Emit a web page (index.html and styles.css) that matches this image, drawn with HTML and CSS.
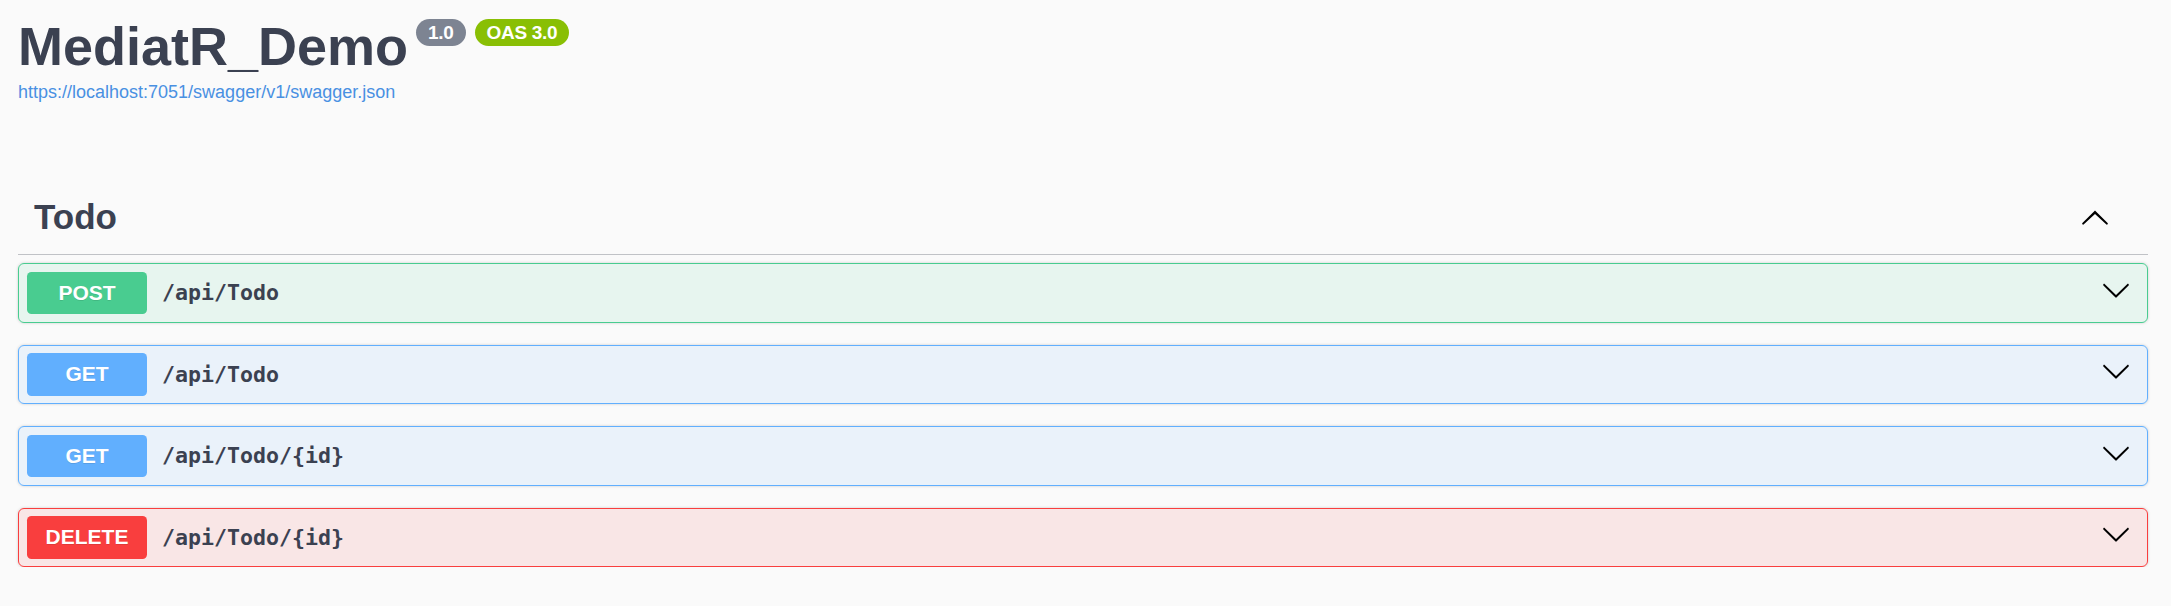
FILE: index.html
```html
<!DOCTYPE html>
<html lang="en">
<head>
<meta charset="utf-8">
<title>MediatR_Demo</title>
<link rel="stylesheet" href="styles.css">
</head>
<body>
<div class="page">
  <header class="info">
    <div class="title-row">
      <h1 class="title">MediatR_Demo</h1>
      <span class="badge version">1.0</span>
      <span class="badge oas">OAS 3.0</span>
    </div>
    <a class="base-url" href="#">https://localhost:7051/swagger/v1/swagger.json</a>
  </header>

  <section class="tag-section">
    <div class="tag-header">
      <h3 class="tag-name">Todo</h3>
      <span class="toggle">
        <svg class="arrow" viewBox="0 0 20 20" width="30" height="30"><path d="M17.418 14.908c.271.268.709.268.979 0s.271-.701 0-.969l-7.908-7.83c-.27-.268-.707-.268-.979 0l-7.908 7.83c-.27.268-.27.701 0 .969.271.268.709.268.978 0L10 8l7.418 6.908z"/></svg>
      </span>
    </div>

    <div class="opblocks">
      <div class="opblock post">
        <span class="method">POST</span>
        <span class="path">/api/Todo</span>
        <svg class="arrow down" viewBox="0 0 20 20" width="30" height="30"><path d="M17.418 6.109c.272-.268.709-.268.979 0s.271.701 0 .969l-7.908 7.83c-.27.268-.707.268-.979 0l-7.908-7.830c-.27-.268-.27-.701 0-.969.271-.268.709-.268.979 0L10 13.25l7.418-7.141z"/></svg>
      </div>
      <div class="opblock get">
        <span class="method">GET</span>
        <span class="path">/api/Todo</span>
        <svg class="arrow down" viewBox="0 0 20 20" width="30" height="30"><path d="M17.418 6.109c.272-.268.709-.268.979 0s.271.701 0 .969l-7.908 7.83c-.27.268-.707.268-.979 0l-7.908-7.83c-.27-.268-.27-.701 0-.969.271-.268.709-.268.979 0L10 13.25l7.418-7.141z"/></svg>
      </div>
      <div class="opblock get">
        <span class="method">GET</span>
        <span class="path">/api/Todo/{id}</span>
        <svg class="arrow down" viewBox="0 0 20 20" width="30" height="30"><path d="M17.418 6.109c.272-.268.709-.268.979 0s.271.701 0 .969l-7.908 7.83c-.27.268-.707.268-.979 0l-7.908-7.83c-.27-.268-.27-.701 0-.969.271-.268.709-.268.979 0L10 13.25l7.418-7.141z"/></svg>
      </div>
      <div class="opblock delete">
        <span class="method">DELETE</span>
        <span class="path">/api/Todo/{id}</span>
        <svg class="arrow down" viewBox="0 0 20 20" width="30" height="30"><path d="M17.418 6.109c.272-.268.709-.268.979 0s.271.701 0 .969l-7.908 7.83c-.27.268-.707.268-.979 0l-7.908-7.83c-.27-.268-.27-.701 0-.969.271-.268.709-.268.979 0L10 13.25l7.418-7.141z"/></svg>
      </div>
    </div>
  </section>
</div>
</body>
</html>
```

FILE: styles.css
```css
html, body {
  margin: 0;
  padding: 0;
  background: #fafafa;
}

body {
  font-family: "Liberation Sans", Arial, sans-serif;
  color: #3b4151;
}

.page {
  padding: 15px 23px 0 18px;
}

/* ---------- info ---------- */
.title-row {
  display: flex;
  align-items: flex-start;
}

.title {
  margin: 0;
  font-size: 54px;
  line-height: 62px;
  font-weight: 700;
  color: #3b4151;
}

.badge {
  display: inline-block;
  margin-top: 4px;
  height: 27px;
  line-height: 27px;
  padding: 0 12px;
  border-radius: 57px;
  color: #fff;
  font-size: 19px;
  letter-spacing: -0.3px;
  font-weight: 700;
}

.version {
  margin-left: 8px;
  background: #7d8492;
}

.oas {
  margin-left: 9px;
  background: #89bf04;
}

.base-url {
  display: block;
  margin-top: 5px;
  font-size: 18px;
  line-height: 21px;
  color: #4990e2;
  text-decoration: none;
}

/* ---------- tag section ---------- */
.tag-section {
  margin-top: 75px;
}

.tag-header {
  display: flex;
  align-items: center;
  padding: 16px 38px 14px 16px;
  border-bottom: 1px solid rgba(59, 65, 81, 0.3);
  margin-bottom: 8px;
}

.tag-name {
  flex: 1;
  margin: 0;
  font-size: 35px;
  line-height: 46px;
  font-weight: 700;
  color: #3b4151;
}

.toggle {
  display: flex;
}

.arrow {
  display: block;
  fill: #000;
}

/* ---------- operation blocks ---------- */
.opblocks {
  display: flex;
  flex-direction: column;
  gap: 22px;
}

.opblock {
  display: flex;
  align-items: center;
  padding: 7.5px 16px 7.5px 8px;
  border: 1px solid #000;
  border-radius: 6px;
  box-shadow: 0 0 3px rgba(0, 0, 0, 0.19);
}

.method {
  min-width: 120px;
  height: 42.5px;
  line-height: 42.5px;
  border-radius: 4.5px;
  text-align: center;
  color: #fff;
  font-size: 21px;
  font-weight: 700;
  text-shadow: 0 1px 0 rgba(0, 0, 0, 0.1);
}

.path {
  flex: 1;
  padding: 0 15px;
  font-family: "DejaVu Sans Mono", "Liberation Mono", monospace;
  font-size: 21.6px;
  font-weight: 700;
  color: #3b4151;
}

.arrow.down {
  margin-bottom: 6px;
}

.post {
  background: rgba(73, 204, 144, 0.1);
  border-color: #49cc90;
}
.post .method { background: #49cc90; }

.get {
  background: rgba(97, 175, 254, 0.1);
  border-color: #61affe;
}
.get .method { background: #61affe; }

.delete {
  background: rgba(249, 62, 62, 0.1);
  border-color: #f93e3e;
}
.delete .method { background: #f93e3e; }
```
